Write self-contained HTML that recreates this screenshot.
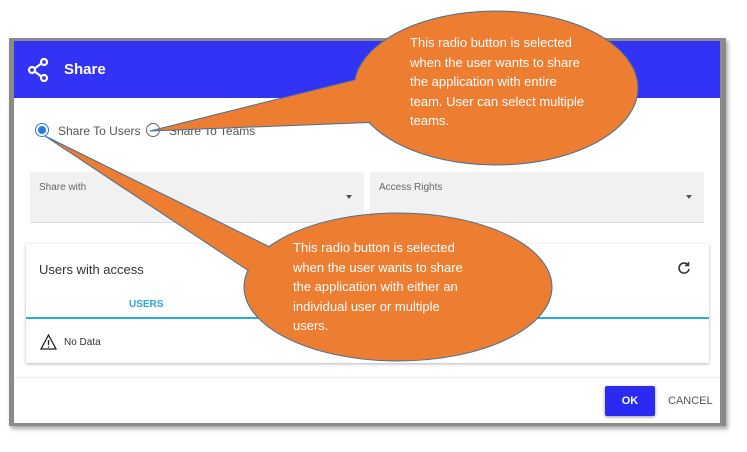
<!DOCTYPE html>
<html><head><meta charset="utf-8"><style>
body{margin:0;width:747px;height:452px;background:#fff;position:relative;overflow:hidden;font-family:"Liberation Sans",sans-serif}
.frame{position:absolute;left:9px;top:38px;width:717px;height:388px;background:#8a8a8a;box-shadow:2px 3px 4px #aaa}
.dlg{position:absolute;left:14px;top:41px;width:706px;height:382px;background:#fff}
.hdr{position:absolute;left:0;top:0;width:706px;height:57px;background:#3333f5;color:#fff}
.hdr .t{position:absolute;left:50px;top:20px;font-size:15px;font-weight:bold}
.radio{position:absolute;top:82px;width:14px;height:14px;border:1.5px solid #666;border-radius:50%;box-sizing:border-box}
.lbl{position:absolute;top:83px;font-size:12px;color:#555}
.fld{position:absolute;top:131px;height:50px;background:#f1f1f1;border-bottom:1px solid #ddd}
.fld span{position:absolute;left:9px;top:10px;font-size:10px;color:#666}
.fld i{position:absolute;right:12px;top:23px;border:3.5px solid transparent;border-top:4px solid #555}
.card{position:absolute;left:12px;top:203px;width:683px;height:119px;background:#fff;box-shadow:0 1px 3px rgba(0,0,0,.3)}
.foot{position:absolute;left:0;top:336px;width:706px;border-top:1px solid #eee}
.ok{position:absolute;left:591px;top:345px;width:50px;height:30px;background:#2a2af2;color:#fff;font-size:11px;font-weight:bold;text-align:center;line-height:30px;border-radius:2px;box-shadow:0 1px 3px #999}
.cancel{position:absolute;left:654px;top:354px;font-size:11px;color:#555}
svg.ov{position:absolute;left:0;top:0}
.ct{position:absolute;color:#fff;font-size:13px;line-height:19.5px;font-family:"Liberation Sans Narrow","Liberation Sans",sans-serif}
</style></head><body>
<div class="frame"></div>
<div class="dlg">
 <div class="hdr">
  <svg style="position:absolute;left:13px;top:17px" width="22" height="24" viewBox="0 0 22 24" fill="none" stroke="#fff" stroke-width="2.2"><circle cx="17" cy="4" r="3"/><circle cx="5" cy="12" r="3"/><circle cx="17" cy="20" r="3"/><path d="M7.6 10.5 14.4 5.5M7.6 13.5l6.8 5"/></svg>
  <div class="t">Share</div>
 </div>
 <div class="radio" style="left:21px;border-color:#2b7bd6;background:radial-gradient(#2b7bd6 3.5px,#fff 4.5px)"></div>
 <div class="lbl" style="left:44px">Share To Users</div>
 <div class="radio" style="left:132px"></div>
 <div class="lbl" style="left:155px">Share To Teams</div>
 <div class="fld" style="left:16px;width:334px"><span>Share with</span><i></i></div>
 <div class="fld" style="left:356px;width:334px"><span>Access Rights</span><i></i></div>
 <div class="card">
  <div style="position:absolute;left:13px;top:18px;font-size:13px;color:#333">Users with access</div>
  <div style="position:absolute;left:103px;top:55px;font-size:10px;font-weight:bold;color:#2aa6e0">USERS</div>
  <div style="position:absolute;left:0;top:73px;width:683px;height:2px;background:#29a9e6"></div>
  <svg style="position:absolute;left:14px;top:90px" width="17" height="16" viewBox="0 0 17 16"><path d="M8.5 1 16 15H1Z" fill="none" stroke="#222" stroke-width="1.3"/><path d="M8.5 6v5M8.5 12.3v1.3" stroke="#222" stroke-width="1.3"/></svg>
  <div style="position:absolute;left:38px;top:93px;font-size:10px;color:#333">No Data</div>
  <svg style="position:absolute;left:651px;top:17px" width="14" height="14" viewBox="0 0 14 14" fill="none" stroke="#333" stroke-width="1.6"><path d="M11 4A5 5 0 1 0 12 8"/><path d="M11.5 1v3.5H8" /></svg>
 </div>
 <div class="foot"></div>
 <div class="ok">OK</div>
 <div class="cancel">CANCEL</div>
</div>
<svg class="ov" width="747" height="452">
 <g fill="#ed7d31" stroke="#41719c" stroke-width="1">
  <ellipse cx="496" cy="88" rx="142" ry="77"/>
  <ellipse cx="398" cy="287" rx="154" ry="74"/>
  <path d="M150 131 L382 122 L386 72 Z"/>
  <path d="M45 136 L276 250 L270 285 Z"/>
 </g>
 <ellipse cx="496" cy="88" rx="141" ry="76" fill="#ed7d31"/>
 <ellipse cx="398" cy="287" rx="153" ry="73" fill="#ed7d31"/>
</svg>
<div class="ct" style="left:410px;top:33px">This radio button is selected<br>when the user wants to share<br>the application with entire<br>team. User can select multiple<br>teams.</div>
<div class="ct" style="left:293px;top:238px">This radio button is selected<br>when the user wants to share<br>the application with either an<br>individual user or multiple<br>users.</div>
</body></html>
